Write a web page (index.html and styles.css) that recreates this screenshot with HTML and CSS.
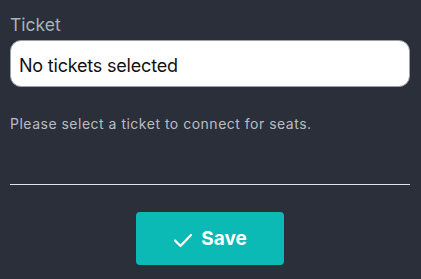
FILE: index.html
```html
<!DOCTYPE html>
<html>
<head>
<meta charset="utf-8">
<link rel="stylesheet" href="styles.css">
</head>
<body>
<div class="form">
  <label class="label">Ticket</label>
  <div class="select">No tickets selected</div>
  <p class="help">Please select a ticket to connect for seats.</p>
  <hr class="divider">
  <div class="actions">
    <button class="save">
      <svg class="check" width="20" height="16" viewBox="0 0 20 16"><path d="M2 8.5 L7.5 14 L18 3" fill="none" stroke="#fff" stroke-width="2.2" stroke-linecap="round" stroke-linejoin="round"/></svg>
      <span>Save</span>
    </button>
  </div>
</div>
</body>
</html>
```
FILE: styles.css
```css
html, body {
  margin: 0;
  padding: 0;
  background: #2a2f39;
  font-family: Inter, "Noto Sans", sans-serif;
}
.form {
  padding: 14px 11px 0 10px;
  display: flex;
  flex-direction: column;
}
.label {
  color: #aab2bb;
  font-size: 17.5px;
  line-height: 22px;
  height: 26px;
}
.select {
  box-sizing: border-box;
  height: 47px;
  background: #fff;
  border: 1px solid #9aa0a6;
  border-radius: 11px;
  padding: 3px 8px 0 8px;
  display: flex;
  align-items: center;
  font-size: 18px;
  color: #111;
  letter-spacing: -0.2px;
}
.help {
  margin: 28px 0 0 0;
  color: #b9bdc3;
  font-size: 14px;
  line-height: 18px;
  letter-spacing: 0.5px;
}
.divider {
  margin: 51px 0 0 0;
  border: 0;
  border-top: 1px solid #e0e2e5;
  height: 0;
}
.actions {
  display: flex;
  justify-content: center;
  padding-top: 27px;
}
.save {
  width: 148px;
  height: 53px;
  border: 0;
  border-radius: 4px;
  background: #0bbab4;
  color: #fff;
  font-family: Inter, sans-serif;
  font-weight: 700;
  font-size: 19px;
  display: flex;
  align-items: center;
  justify-content: center;
  gap: 8px;
  padding: 0;
}
.check { margin-top: 3px; }
```
